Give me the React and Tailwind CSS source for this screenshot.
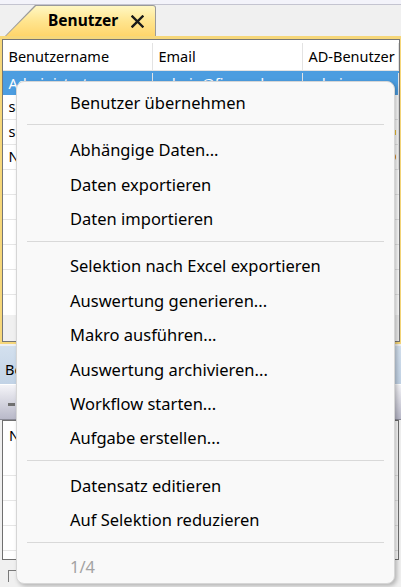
import React from 'react';

const menuGroups = [
  ['Benutzer übernehmen'],
  ['Abhängige Daten...', 'Daten exportieren', 'Daten importieren'],
  [
    'Selektion nach Excel exportieren',
    'Auswertung generieren...',
    'Makro ausführen...',
    'Auswertung archivieren...',
    'Workflow starten...',
    'Aufgabe erstellen...',
  ],
  ['Datensatz editieren', 'Auf Selektion reduzieren'],
];

const users = [
  { name: 'sadmin', email: 'sadmin@firma.de', ad: 'sadmin' },
  { name: 'schulz', email: 'm.schulz@firma.de', ad: 'mschulz' },
  { name: 'Neumann', email: 'k.neumann@firma.de', ad: 'kneumann' },
];

function Cell({ children, w, className = '' }) {
  return (
    <div className={`h-full flex items-center pl-[6px] border-r border-[#e3e3e3] overflow-hidden whitespace-nowrap ${w} ${className}`}>
      {children}
    </div>
  );
}

function ContextMenu() {
  return (
    <div className="absolute left-[16px] top-[81px] w-[379px] h-[503px] bg-[#f9f9f9] border border-[#d6d6d6] rounded-[8px] shadow-[2px_2px_4px_rgba(0,0,0,0.25)] pt-[4px] text-[16.5px] text-black">
      {menuGroups.map((group, gi) => (
        <div key={gi}>
          {group.map((label) => (
            <div key={label} className="h-[34.4px] flex items-center pl-[53px] whitespace-nowrap">
              {label}
            </div>
          ))}
          <div className="mx-[10px] mt-[4px] mb-[8px] h-px bg-[#d9d9d9]" />
        </div>
      ))}
      <div className="h-[34px] flex items-center pl-[53px] text-[#a3a3a3]">1/4</div>
    </div>
  );
}

export default function App() {
  return (
    <div
      className="relative w-[401px] h-[587px] overflow-hidden bg-[#f0f0f0] text-[14.5px] text-black"
      style={{ fontFamily: '"Noto Sans", "Open Sans", sans-serif' }}
    >
      {/* window top strip */}
      <div className="h-[5px] bg-[#f3f3fa] border-b border-[#c4c4d0]" />

      {/* tab bar */}
      <div className="h-[31px] flex items-end pl-[5px]">
        <div className="w-[151px] h-[31px] bg-[#9a9a9a] rounded-tr-[3px] [clip-path:polygon(0_100%,30px_0,100%_0,100%_100%)]">
          <div className="ml-px mt-px w-[149px] h-[30px] rounded-tr-[2px] bg-gradient-to-b from-[#fff7c2] via-[#ffe58f] to-[#ffd56b] [clip-path:polygon(0_100%,30px_0,100%_0,100%_100%)] flex items-center pl-[42px]">
            <span className="font-bold text-[15.5px] leading-none">Benutzer</span>
            <svg className="ml-[13px]" width="13" height="13" viewBox="0 0 13 13">
              <path d="M1.5 1.5 L11.5 11.5 M11.5 1.5 L1.5 11.5" stroke="#1a1a1a" strokeWidth="2.4" strokeLinecap="square" />
            </svg>
          </div>
        </div>
      </div>

      {/* upper grid panel */}
      <div className="h-[3px] bg-[#f6d77a]" />
      <div className="bg-[#f6d77a] px-[1.5px] pb-[2px]">
        <div className="h-[303px] border border-[#767676] bg-[#f0f0f0] flex flex-col">
          <div className="h-[31px] bg-white border-b border-[#e3e3e3] flex pt-[3px]">
            <Cell w="w-[150px]" className="pl-[5px]">Benutzername</Cell>
            <Cell w="w-[150px]">Email</Cell>
            <Cell w="flex-1">AD-Benutzer</Cell>
          </div>
          <div className="h-[24px] bg-[#4c9de0] text-white flex pt-[2px]">
            <Cell w="w-[150px]" className="pl-[5px] border-[#6aafe6]">Administrator</Cell>
            <Cell w="w-[150px]" className="border-[#6aafe6]">admin@firma.de</Cell>
            <Cell w="flex-1">admin</Cell>
          </div>
          {users.map((u, i) => (
            <div key={u.name} className="h-[25px] bg-white border-b border-[#e6e6e6] flex">
              <Cell w="w-[150px]" className="pl-[5px]">{u.name}</Cell>
              <Cell w="w-[150px]">{u.email}</Cell>
              <Cell w="flex-1" className="justify-end pr-[2px]">
                {i === 1 && <span className="w-[5px] h-[5px] bg-[#f2c230]" />}
                {i === 2 && <span className="w-[10px] h-[10px] rounded-full border-2 border-[#d7861c]" />}
              </Cell>
            </div>
          ))}
          {[0, 1, 2, 3, 4].map((r) => (
            <div key={r} className="h-[25px] bg-white border-b border-[#e6e6e6]" />
          ))}
          <div className="h-[20px] bg-white" />
        </div>
      </div>

      {/* lower detail panel */}
      <div className="h-[2px]" />
      <div className="h-[38px] bg-gradient-to-b from-[#d3e0ee] to-[#c2d3e6] flex items-center pl-[5px] pt-[10px]">
        Benutzerrollen
      </div>
      <div className="h-px bg-white" />
      <div className="h-[35px] bg-gradient-to-b from-[#f4f4f8] to-[#b9b9c9] border-b border-[#8a8a96] flex items-center pl-[8px] pt-[4px]">
        <span className="w-[7px] h-[3px] bg-[#707070]" />
      </div>
      <div className="mx-[2px] h-[140px] border border-[#707070] bg-white flex flex-col">
        <div className="h-[55px] border-b border-[#e6e6e6] flex items-start pt-[4px] pl-[6px]">Name</div>
        {[0, 1, 2].map((r) => (
          <div key={r} className="h-[25px] border-b border-[#e6e6e6]" />
        ))}
      </div>
      <div className="h-[22px] flex items-end pl-[8px]">
        <span className="w-[8px] h-[12px] border-l border-t border-[#7a7a7a]" />
      </div>

      <ContextMenu />
    </div>
  );
}
